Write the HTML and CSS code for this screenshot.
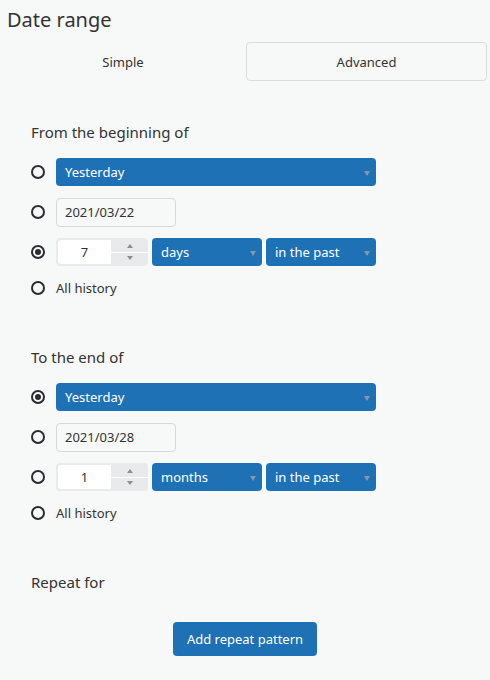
FILE: index.html
```html
<!DOCTYPE html>
<html>
<head>
<meta charset="utf-8">
<link rel="stylesheet" href="styles.css">
</head>
<body>
<h1 class="title">Date range</h1>
<div class="tabs">
  <div class="tab">Simple</div>
  <div class="tab tab-active">Advanced</div>
</div>

<div class="section">
  <div class="heading">From the beginning of</div>
  <div class="row">
    <span class="radio"></span>
    <div class="select select-wide">Yesterday<span class="caret"></span></div>
  </div>
  <div class="row">
    <span class="radio"></span>
    <div class="date">2021/03/22</div>
  </div>
  <div class="row">
    <span class="radio checked"></span>
    <div class="number"><span class="num-value">7</span><span class="spin"><span class="up"></span><span class="down"></span></span></div>
    <div class="select select-small">days<span class="caret"></span></div>
    <div class="select select-small">in the past<span class="caret"></span></div>
  </div>
  <div class="row row-text">
    <span class="radio"></span>
    <span class="label">All history</span>
  </div>
</div>

<div class="section">
  <div class="heading">To the end of</div>
  <div class="row">
    <span class="radio checked"></span>
    <div class="select select-wide">Yesterday<span class="caret"></span></div>
  </div>
  <div class="row">
    <span class="radio"></span>
    <div class="date">2021/03/28</div>
  </div>
  <div class="row">
    <span class="radio"></span>
    <div class="number"><span class="num-value">1</span><span class="spin"><span class="up"></span><span class="down"></span></span></div>
    <div class="select select-small">months<span class="caret"></span></div>
    <div class="select select-small">in the past<span class="caret"></span></div>
  </div>
  <div class="row row-text">
    <span class="radio"></span>
    <span class="label">All history</span>
  </div>
</div>

<div class="section">
  <div class="heading">Repeat for</div>
</div>
<div class="actions">
  <button class="btn">Add repeat pattern</button>
</div>
</body>
</html>
```

FILE: styles.css
```css
* { box-sizing: border-box; }
html, body { margin: 0; padding: 0; }
body {
  background: #f7f8f8;
  font-family: "Noto Sans", "Open Sans", sans-serif;
  color: #333;
  width: 490px;
  height: 680px;
  overflow: hidden;
}
.title {
  margin: 8px 0 0 7px;
  font-size: 20px;
  line-height: 24px;
  font-weight: 400;
  color: #333;
}
.tabs {
  margin-top: 10px;
  width: 487px;
  display: grid;
  grid-template-columns: 246px 1fr;
  height: 39px;
}
.tab {
  display: flex;
  align-items: center;
  justify-content: center;
  font-size: 13px;
  color: #333;
}
.tab-active {
  border: 1px solid #dcdcdc;
  border-radius: 4px;
}
.section {
  padding-left: 31px;
  margin-top: 41px;
}
.section + .section { margin-top: 49px; }
.heading {
  font-size: 15px;
  line-height: 20px;
  margin-bottom: 16px;
}
.row {
  display: flex;
  align-items: center;
  height: 28px;
  margin-bottom: 12px;
  gap: 4px;
}
.row-text { height: 20px; margin-bottom: 0; }
.radio {
  width: 14px;
  height: 14px;
  border: 2px solid #2b2b33;
  border-radius: 50%;
  margin-right: 7px;
  flex: none;
  display: flex;
  align-items: center;
  justify-content: center;
}
.radio.checked::after {
  content: "";
  width: 6px;
  height: 6px;
  border-radius: 50%;
  background: #2b2b33;
}
.label { font-size: 13px; }
.select {
  position: relative;
  background: #1f71b5;
  color: #fff;
  font-size: 13px;
  height: 28px;
  border-radius: 4px;
  padding-left: 9px;
  display: flex;
  align-items: center;
}
.select-wide { width: 320px; }
.select-small { width: 110px; }
.caret {
  position: absolute;
  right: 6px;
  top: 13px;
  width: 0;
  height: 0;
  border-left: 3.5px solid transparent;
  border-right: 3.5px solid transparent;
  border-top: 5px solid #8a97a3;
}
.date {
  width: 120px;
  height: 29px;
  border: 1px solid #d8d8d8;
  border-radius: 4px;
  font-size: 13px;
  padding-left: 8px;
  display: flex;
  align-items: center;
}
.number {
  width: 92px;
  height: 28px;
  background: #e9eaeb;
  border-radius: 4px;
  padding: 2px 0 2px 2px;
  display: flex;
}
.num-value {
  width: 53px;
  background: #fff;
  border-radius: 3px 0 0 3px;
  font-size: 13px;
  display: flex;
  align-items: center;
  justify-content: center;
}
.spin {
  flex: 1;
  display: flex;
  flex-direction: column;
}
.spin .up, .spin .down {
  flex: 1;
  display: flex;
  align-items: center;
  justify-content: center;
}
.spin .up { border-bottom: 1px solid #fff; }
.spin .up::after {
  content: "";
  border-left: 3.5px solid transparent;
  border-right: 3.5px solid transparent;
  border-bottom: 4px solid #8e8e8e;
}
.spin .down::after {
  content: "";
  border-left: 3.5px solid transparent;
  border-right: 3.5px solid transparent;
  border-top: 4px solid #8e8e8e;
}
.actions {
  margin-top: 30px;
  display: flex;
  justify-content: center;
}
.btn {
  width: 144px;
  height: 34px;
  background: #1f71b5;
  color: #fff;
  border: none;
  border-radius: 4px;
  font-family: inherit;
  font-size: 13px;
  padding: 0;
}
```
